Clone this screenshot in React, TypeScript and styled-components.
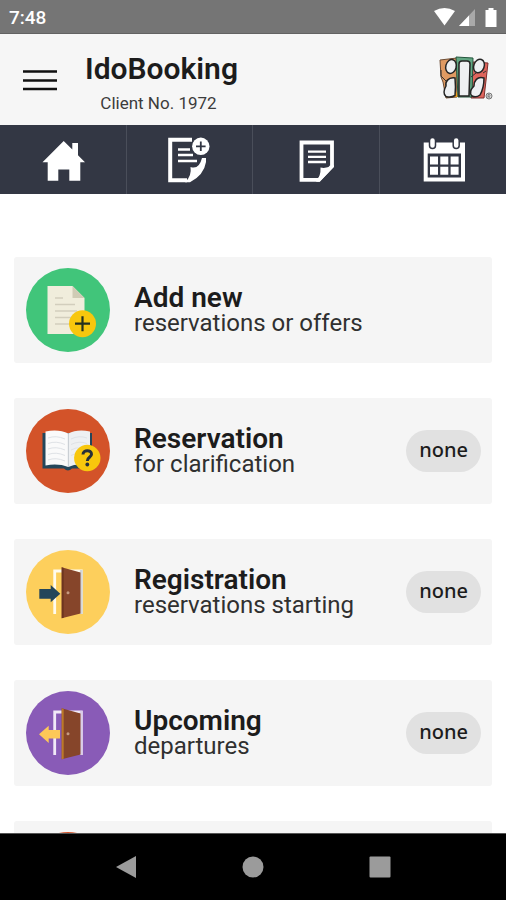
import React from "react";
import styled, { createGlobalStyle } from "styled-components";

const GlobalStyle = createGlobalStyle`
  *, *::before, *::after { box-sizing: border-box; }
  body {
    margin: 0;
    background: #fff;
    color: #1c1c1c;
    font-family: Roboto, "Liberation Sans", sans-serif;
  }
  button { font: inherit; color: inherit; }
`;

const Screen = styled.div`
  display: flex;
  flex-direction: column;
  height: 100vh;
  overflow: hidden;
`;

const StatusBar = styled.div`
  flex: none;
  display: flex;
  align-items: center;
  justify-content: space-between;
  height: 34px;
  padding: 2px 8px 0 9px;
  background: #757575;
  border-bottom: 1px solid #626262;
  color: #fff;
  font-size: 19px;
  font-weight: 500;
  line-height: 20px;
`;

const Header = styled.header`
  flex: none;
  display: flex;
  align-items: center;
  height: 91px;
  padding: 0 11px 0 20px;
  background: #f6f6f6;
`;

const MenuButton = styled.button`
  display: flex;
  padding: 0;
  border: 0;
  background: none;
  cursor: pointer;
`;

const Brand = styled.div`
  margin: 0 auto 0 25px;
  padding-top: 10px;
  text-align: center;
`;

const BrandName = styled.h1`
  margin: 0;
  font-size: 30px;
  font-weight: 600;
  line-height: 36px;
`;

const ClientNumber = styled.p`
  margin: 0;
  padding-right: 6px;
  color: #3c3c3c;
  font-size: 17px;
  line-height: 32px;
`;

const NavBar = styled.nav`
  flex: none;
  display: grid;
  grid-template-columns: repeat(4, 1fr);
  height: 69px;
  background: #333744;
`;

const NavLink = styled.a`
  display: flex;
  align-items: center;
  justify-content: center;
  color: #fff;

  &:not(:last-child) { border-right: 1px solid #4a4e5a; }
`;

const CardList = styled.main`
  flex: 1;
  min-height: 0;
  display: flex;
  flex-direction: column;
  gap: 35px;
  padding: 63px 14px 0;
  overflow: hidden;
`;

const Card = styled.button`
  flex: none;
  display: flex;
  align-items: center;
  gap: 24px;
  width: 100%;
  height: 106px;
  padding: 0 11px 0 12px;
  border: 0;
  border-radius: 3px;
  background: #f5f5f5;
  text-align: left;
  cursor: pointer;
`;

const CardText = styled.span`
  flex: 1;
  display: flex;
  flex-direction: column;
  padding-top: 1px;
`;

const CardTitle = styled.span`
  font-size: 28px;
  font-weight: 600;
  line-height: 26px;
`;

const CardSubtitle = styled.span`
  color: #303030;
  font-size: 24px;
  font-weight: 400;
  line-height: 25px;
`;

const Pill = styled.span`
  padding: 0 13px 2px;
  border-radius: 21px;
  background: #e1e1e1;
  font-family: "Noto Sans", sans-serif;
  font-size: 20px;
  font-weight: 500;
  line-height: 40px;
`;

const SystemBar = styled.div`
  flex: none;
  display: flex;
  align-items: center;
  justify-content: center;
  gap: 103px;
  height: 67px;
  border-top: 1px solid #555;
  background: #000;
`;

const SystemButton = styled.button`
  display: flex;
  padding: 0;
  border: 0;
  background: none;
`;

const StatusIcons = () => (
  <svg width="66" height="22" viewBox="0 0 66 22" aria-hidden="true">
    <path d="M2 4Q12.500-2 23 4L12.500 18.500Z" fill="#fff" />
    <path d="M43 2V19H27Z" fill="#a9a9a9" />
    <path d="M37 8.400V19H27Z" fill="#fff" />
    <path d="M56.500 1h5v2h3v17h-11V3h3z" fill="#fff" />
  </svg>
);

const MenuIcon = () => (
  <svg width="40" height="28" viewBox="0 0 40 28" aria-hidden="true">
    <path d="M3 5.500H37M3 14.500H37M3 23H37" stroke="#111" strokeWidth="2.500" />
  </svg>
);

const Logo = () => (
  <svg width="58" height="58" viewBox="0 0 58 58" role="img" aria-label="IdoBooking">
    <path d="M3 9 20 7V46L9 47 6 31 4 26Z" fill="#df9a62" stroke="#6b4b33" />
    <path d="M17 36 22 46H16Z" fill="#ee9b1c" />
    <path d="M36 11 51 12 47 47H34Z" fill="#df655c" stroke="#7c2f2d" />
    <path d="M19 6 36 7 35 46H21Z" fill="#62a783" stroke="#24563d" />
    <g fill="#eef0f2" stroke="#242424" strokeWidth="1.500">
      <path d="M22 13Q22 10 25 10H30Q33 10 33 13L32 45H22Z" />
      <ellipse cx="14" cy="15.500" rx="5.200" ry="7" transform="rotate(15 14 15.500)" />
      <ellipse cx="42" cy="15" rx="5.200" ry="7" transform="rotate(20 42 15)" />
      <path d="M18 27C11 26 8 31 9 35Q5 42 9 45.500Q14 47 18 44.500Q19 37 18 27Z" />
      <path d="M47 27C40 25 37 30 37 35Q31 41 35 45Q39 47 43 44Q47 37 47 27Z" />
    </g>
    <path d="M4 19V25L9 30M34 26 39 22M46 22 49 20" fill="none" stroke="#333" />
    <circle cx="52" cy="45" r="3" fill="#ddd" stroke="#777" />
    <path d="M51 47V43.500H52.500Q53.500 44.500 52.500 45.200H51M52 45.200 53 47" fill="none" stroke="#666" strokeWidth=".7" />
  </svg>
);

const HomeIcon = () => (
  <svg width="48" height="48" viewBox="0 0 48 48" aria-hidden="true">
    <path fill="currentColor" d="M24.700 5 33.300 13.600V7H39V19.300L46 26.300H41.300V44.700H30.300V33.500H19.300V44.700H8.700V26.300H3.500Z" />
  </svg>
);

const AddNoteIcon = () => (
  <svg width="48" height="48" viewBox="0 0 48 48" aria-hidden="true">
    <path d="M27 3.700H5.200V44.300H22" fill="none" stroke="currentColor" strokeWidth="4" />
    <path d="M37 22H41V26Q39 39 25 46.300H20Q27 40 25.500 31Q34 34 37 22Z" fill="currentColor" />
    <path d="M13 13.500H25M13 19H28M13 25H32" stroke="currentColor" strokeWidth="2.500" />
    <circle cx="35.800" cy="10.300" r="8.700" fill="currentColor" />
    <path d="M31 10.300H40.600M35.800 5.500V15.100" stroke="#333744" strokeWidth="1.800" />
  </svg>
);

const NoteIcon = () => (
  <svg width="48" height="48" viewBox="0 0 48 48" aria-hidden="true">
    <path d="M9.500 6.500H40V30L27 43.800H9.500Z" fill="none" stroke="currentColor" strokeWidth="3.800" />
    <path d="M28.500 31.500Q34 33 41.900 29V31L27.500 45.700H24Q29 40 28.500 31.500Z" fill="currentColor" />
    <path d="M16 15.700H34M16 20.800H34M16 26H34" stroke="currentColor" strokeWidth="2.300" />
  </svg>
);

const CalendarIcon = () => (
  <svg width="48" height="48" viewBox="0 0 48 48" aria-hidden="true">
    <path fill="currentColor" fillRule="evenodd" d="M4.700 6.500H46V45.500H4.700ZM8.700 17.500V41.500H42V17.500Z" />
    <path fill="currentColor" d="M11 20.500h8v8h-8zM21.300 20.500h8v8h-8zM31.600 20.500h8v8h-8zM11 30.700h8v8h-8zM21.300 30.700h8v8h-8zM31.600 30.700h8v8h-8z" />
    <g fill="currentColor" stroke="#333744" strokeWidth="1.500">
      <rect x="10.500" y="1.500" width="6" height="11" rx="3" />
      <rect x="34.200" y="1.500" width="6" height="11" rx="3" />
    </g>
  </svg>
);

const Disc = ({ color, children }: { color: string; children?: React.ReactNode }) => (
  <svg width="84" height="84" viewBox="0 0 84 84" aria-hidden="true">
    <circle cx="42" cy="42" r="42" fill={color} />
    {children}
  </svg>
);

const AddIcon = () => (
  <Disc color="#41c57a">
    <path d="M21.500 18H46.500L58.500 30V66H21.500Z" fill="#f0eddc" />
    <path d="M46.500 18 58.500 30H46.500Z" fill="#cfcbb5" />
    <path d="M29 30H37M29 36.500H49M29 43H51M29 49.500H48M29 56H46" stroke="#d2cebd" strokeWidth="1.500" />
    <circle cx="56.500" cy="55.700" r="13.500" fill="#f8c70d" />
    <path d="M49 55.700H64M56.500 48.200V63.200" stroke="#24301f" strokeWidth="2.200" />
  </Disc>
);

const BookIcon = () => (
  <Disc color="#d35329">
    <path d="M16.500 24H66V59.500H46Q42 63.500 38 59.500H16.500Z" fill="#24465a" />
    <path d="M19.500 22.500Q33 20 42.300 24.500V58Q32 54 19.500 56.500Z" fill="#fafafa" />
    <path d="M42.300 24.500Q51 20 64 22.500V56.500Q51 54 42.300 58Z" fill="#eef0f2" />
    <path d="M42.300 24.500V58" stroke="#cbd0d5" />
    <path d="M22 29Q30 26 39 30M22 34.500Q30 31.500 39 35.500M22 40Q30 37 39 41M22 45.500Q30 42.500 39 46.500M22 51Q30 48 39 52M45 30Q53 26 61 29M45 35.500Q53 31.500 61 34.500M45 41Q50 38 55 39M45 46.500L50 44.500" fill="none" stroke="#dfe2e6" />
    <circle cx="61.300" cy="49" r="13.200" fill="#f8c70d" />
    <path d="M57 45.500C57 40.500 65.500 40.500 65.500 45.200C65.500 48.500 61.300 48 61.300 52" fill="none" stroke="#26303a" strokeWidth="3" />
    <circle cx="61.300" cy="55.500" r="1.900" fill="#26303a" />
  </Disc>
);

const DoorIcon = ({ color, leaving }: { color: string; leaving?: boolean }) => (
  <Disc color={color}>
    <path d="M28.700 64V21H55.300V64" fill="none" stroke={leaving ? "#f1e9f7" : "#fffbee"} strokeWidth="2.800" />
    <path d="M55.300 20V64" stroke={leaving ? "#dacde9" : "#d3d6d8"} strokeWidth="2.800" />
    <path d="M35.700 17.300 54.500 22.500V63.500L35.700 68.300Z" fill="#86452a" />
    <path d="M35.700 17.300 37.700 17.900V67.800L35.700 68.300Z" fill={leaving ? "#bc7928" : "#6e3520"} />
    <circle cx="42" cy="42.700" r="1.500" fill="#c69a80" />
    {leaving ? (
      <path d="M13 43.300 22.700 34.700V39H34V47.500H22.700V52Z" fill="#fdc858" />
    ) : (
      <path d="M13.300 39H24.700V35L34.300 43.700 24.700 52.300V48.700H13.300Z" fill="#24465a" />
    )}
  </Disc>
);

const navItems = [
  { label: "Home", icon: <HomeIcon /> },
  { label: "Add reservation", icon: <AddNoteIcon /> },
  { label: "Reservations", icon: <NoteIcon /> },
  { label: "Calendar", icon: <CalendarIcon /> },
];

const cards = [
  { title: "Add new", subtitle: "reservations or offers", icon: <AddIcon /> },
  { title: "Reservation", subtitle: "for clarification", icon: <BookIcon />, status: "none" },
  { title: "Registration", subtitle: "reservations starting", icon: <DoorIcon color="#fdcf5c" />, status: "none" },
  { title: "Upcoming", subtitle: "departures", icon: <DoorIcon color="#895bb7" leaving />, status: "none" },
];

export default function App() {
  return (
    <Screen>
      <GlobalStyle />
      <StatusBar>
        <span>7:48</span>
        <StatusIcons />
      </StatusBar>
      <Header>
        <MenuButton type="button" aria-label="Menu">
          <MenuIcon />
        </MenuButton>
        <Brand>
          <BrandName>IdoBooking</BrandName>
          <ClientNumber>Client No. 1972</ClientNumber>
        </Brand>
        <Logo />
      </Header>
      <NavBar>
        {navItems.map((item) => (
          <NavLink key={item.label} href="#" aria-label={item.label}>
            {item.icon}
          </NavLink>
        ))}
      </NavBar>
      <CardList>
        {cards.map((card) => (
          <Card key={card.title} type="button">
            {card.icon}
            <CardText>
              <CardTitle>{card.title}</CardTitle>
              <CardSubtitle>{card.subtitle}</CardSubtitle>
            </CardText>
            {card.status && <Pill>{card.status}</Pill>}
          </Card>
        ))}
        <Card type="button" aria-label="More">
          <Disc color="#d35329" />
        </Card>
      </CardList>
      <SystemBar>
        <SystemButton type="button" aria-label="Back">
          <svg width="24" height="24" viewBox="0 0 24 24">
            <path d="M2 12 22 1V23Z" fill="#9b9b9b" />
          </svg>
        </SystemButton>
        <SystemButton type="button" aria-label="Home screen">
          <svg width="24" height="24" viewBox="0 0 24 24">
            <circle cx="12" cy="12" r="10.500" fill="#9b9b9b" />
          </svg>
        </SystemButton>
        <SystemButton type="button" aria-label="Recent apps">
          <svg width="24" height="24" viewBox="0 0 24 24">
            <rect x="1.500" y="1.500" width="21" height="21" rx="1" fill="#9b9b9b" />
          </svg>
        </SystemButton>
      </SystemBar>
    </Screen>
  );
}
